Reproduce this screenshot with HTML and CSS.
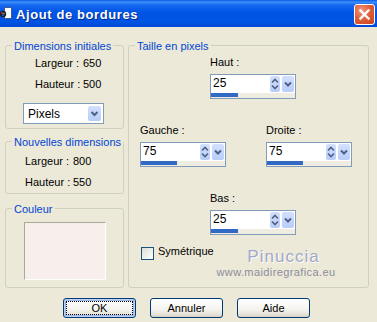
FILE: index.html
```html
<!DOCTYPE html>
<html lang="fr">
<head>
  <meta charset="UTF-8" />
  <meta name="viewport" content="width=device-width, initial-scale=1.0"/>
  <title>Ajout de bordures</title>
  <link rel="stylesheet" href="styles.css">
</head>

<body>
  <div class="window">
    <!-- Title bar -->
    <div class="titlebar">
      <svg class="app-icon" width="13" height="13" viewBox="0 0 13 13">
        <rect x="4.5" y="0.5" width="7" height="11" fill="#fff" stroke="#3a5a9a"/>
        <circle cx="3" cy="7" r="3.2" fill="#1a1a2a"/>
        <circle cx="2" cy="6" r="1" fill="#e03030"/>
        <circle cx="4" cy="6.5" r="1" fill="#30b040"/>
        <circle cx="2.8" cy="8.3" r="1" fill="#3060e0"/>
      </svg>
      <span class="title">Ajout de bordures</span>
      <span class="close-btn">
        <svg width="19" height="19" viewBox="0 0 19 19">
          <path d="M5.5 5.5 L13.5 13.5 M13.5 5.5 L5.5 13.5" stroke="#fff" stroke-width="2.4" stroke-linecap="square"/>
        </svg>
      </span>
    </div>

    <div class="dialog">
      <div class="columns">
        <div class="left-col">
          <div class="group group-initial">
            <div class="group-title">Dimensions initiales</div>
            <div class="dims">
              <span>Largeur :</span><span>650</span>
              <span>Hauteur :</span><span>500</span>
            </div>
            <div class="select">
              <span class="select-text">Pixels</span>
              <span class="drop-btn">
                <svg width="13" height="15" viewBox="0 0 13 15"><path d="M3.5 6 L6.5 9 L9.5 6" fill="none" stroke="#4d6185" stroke-width="2"/></svg>
              </span>
            </div>
          </div>

          <div class="group group-new">
            <div class="group-title">Nouvelles dimensions</div>
            <div class="dims">
              <span>Largeur :</span><span>800</span>
              <span>Hauteur :</span><span>550</span>
            </div>
          </div>

          <div class="group group-color">
            <div class="group-title">Couleur</div>
            <div class="swatch"></div>
          </div>
        </div>

        <div class="group group-size">
          <div class="group-title">Taille en pixels</div>

          <div class="field-row row-center">
            <div class="field">
              <span class="field-label">Haut :</span>
              <div class="spin">
                <div class="spin-main">
                  <span class="spin-value">25</span>
                  <span class="spin-arrows"><svg width="10" height="16" viewBox="0 0 10 16"><path d="M2 6.5 L5 3.5 L8 6.5 M2 9.5 L5 12.5 L8 9.5" fill="none" stroke="#4d6185" stroke-width="1.6"/></svg></span>
                  <span class="spin-drop"><svg width="12" height="16" viewBox="0 0 12 16"><path d="M3 6.5 L6 9.5 L9 6.5" fill="none" stroke="#4d6185" stroke-width="2"/></svg></span>
                </div>
                <div class="spin-bar"><div class="spin-fill" style="width:27px"></div></div>
              </div>
            </div>
          </div>

          <div class="field-row row-pair">
            <div class="field">
              <span class="field-label">Gauche :</span>
              <div class="spin">
                <div class="spin-main">
                  <span class="spin-value">75</span>
                  <span class="spin-arrows"><svg width="10" height="16" viewBox="0 0 10 16"><path d="M2 6.5 L5 3.5 L8 6.5 M2 9.5 L5 12.5 L8 9.5" fill="none" stroke="#4d6185" stroke-width="1.6"/></svg></span>
                  <span class="spin-drop"><svg width="12" height="16" viewBox="0 0 12 16"><path d="M3 6.5 L6 9.5 L9 6.5" fill="none" stroke="#4d6185" stroke-width="2"/></svg></span>
                </div>
                <div class="spin-bar"><div class="spin-fill" style="width:36px"></div></div>
              </div>
            </div>
            <div class="field">
              <span class="field-label">Droite :</span>
              <div class="spin">
                <div class="spin-main">
                  <span class="spin-value">75</span>
                  <span class="spin-arrows"><svg width="10" height="16" viewBox="0 0 10 16"><path d="M2 6.5 L5 3.5 L8 6.5 M2 9.5 L5 12.5 L8 9.5" fill="none" stroke="#4d6185" stroke-width="1.6"/></svg></span>
                  <span class="spin-drop"><svg width="12" height="16" viewBox="0 0 12 16"><path d="M3 6.5 L6 9.5 L9 6.5" fill="none" stroke="#4d6185" stroke-width="2"/></svg></span>
                </div>
                <div class="spin-bar"><div class="spin-fill" style="width:36px"></div></div>
              </div>
            </div>
          </div>

          <div class="field-row row-center">
            <div class="field">
              <span class="field-label">Bas :</span>
              <div class="spin">
                <div class="spin-main">
                  <span class="spin-value">25</span>
                  <span class="spin-arrows"><svg width="10" height="16" viewBox="0 0 10 16"><path d="M2 6.5 L5 3.5 L8 6.5 M2 9.5 L5 12.5 L8 9.5" fill="none" stroke="#4d6185" stroke-width="1.6"/></svg></span>
                  <span class="spin-drop"><svg width="12" height="16" viewBox="0 0 12 16"><path d="M3 6.5 L6 9.5 L9 6.5" fill="none" stroke="#4d6185" stroke-width="2"/></svg></span>
                </div>
                <div class="spin-bar"><div class="spin-fill" style="width:27px"></div></div>
              </div>
            </div>
          </div>

          <div class="options">
            <span class="checkbox"></span>
            <span class="check-label">Symétrique</span>
            <div class="watermark">
              <span class="wm-name">Pinuccia</span>
              <span class="wm-site">www.maidiregrafica.eu</span>
            </div>
          </div>
        </div>
      </div>

      <div class="buttons">
        <span class="btn btn-default"><span class="btn-focus">OK</span></span>
        <span class="btn">Annuler</span>
        <span class="btn">Aide</span>
      </div>
    </div>
  </div>
</body>
</html>
```

FILE: styles.css
```css
:root {
  --face: #ece9d8;
  --group-border: #d0d0bf;
  --legend: #0046d5;
  --field-border: #7f9db9;
  --spin-btn: #c6d5fc;
  --bar-fill: #316ac5;
}

body {
  margin: 0;
  background-color: var(--face);
  font-family: "Liberation Sans", Arial, sans-serif;
  font-size: 11px;
  color: #000;
}

.window {
  width: 377px;
  height: 322px;
  overflow: hidden;
  background-color: var(--face);
}

/* Title bar */
.titlebar {
  height: 27px;
  display: flex;
  align-items: flex-start;
  background: linear-gradient(to bottom, #0a5ae8 0%, #3d8ff8 8%, #1869f0 18%, #0055e5 45%, #0054e3 80%, #0048d8 100%);
}

.app-icon {
  margin-top: 7px;
  margin-right: 3px;
}

.title {
  margin-top: 7px;
  line-height: 15px;
  font-size: 13px;
  font-weight: bold;
  color: #fff;
  letter-spacing: 0.6px;
  text-shadow: 1px 1px 0 #0c2a8a;
}

.close-btn {
  margin: 4px 2px 0 auto;
  width: 19px;
  height: 19px;
  border: 1px solid #fff;
  border-radius: 3px;
  background: radial-gradient(circle at 35% 30%, #f09a80 0%, #e2603a 45%, #c8421e 100%);
  display: flex;
}

/* Dialog body */
.dialog {
  padding: 18px 0 0 5px;
}

.columns {
  display: flex;
  gap: 4px;
}

.left-col {
  width: 119px;
  display: flex;
  flex-direction: column;
}

.group {
  box-sizing: border-box;
  border: 1px solid var(--group-border);
  border-radius: 3px;
}

.group-title {
  width: fit-content;
  margin: -6px 0 0 6px;
  padding: 0 2px;
  line-height: 13px;
  color: var(--legend);
  background-color: var(--face);
}

.group-initial {
  height: 84px;
}

.group-new {
  height: 53px;
  margin-top: 12px;
}

.group-color {
  height: 80px;
  margin-top: 14px;
}

.group-size {
  width: 241px;
  height: 243px;
}

.dims {
  display: grid;
  grid-template-columns: 48px auto;
  row-gap: 8px;
  line-height: 13px;
}

.group-initial .dims {
  margin-top: 4px;
  padding-left: 29px;
}

.group-new .dims {
  margin-top: 6px;
  padding-left: 19px;
}

.select {
  box-sizing: border-box;
  width: 81px;
  height: 21px;
  margin: 12px 0 0 17px;
  padding: 1px;
  border: 1px solid var(--field-border);
  background: #fff;
  display: flex;
  align-items: center;
}

.select-text {
  flex: 1;
  padding-left: 3px;
  font-size: 12px;
}

.drop-btn {
  width: 13px;
  height: 15px;
  margin-right: 1px;
  background: linear-gradient(#d3e0fd, #b6cbf9);
  border-radius: 2px;
  display: flex;
}

.swatch {
  box-sizing: border-box;
  width: 82px;
  height: 58px;
  margin: 6px 0 0 18px;
  background-color: #f8efec;
  border: 1px solid;
  border-color: #aca899 #fff #fff #aca899;
}

/* Spin fields */
.field-row {
  display: flex;
}

.row-center {
  padding-left: 81px;
}

.row-pair {
  padding-left: 11px;
  gap: 40px;
}

.field-row:nth-of-type(2) {
  margin-top: 3px;
}

.field-row + .field-row {
  margin-top: 25px;
}

.field {
  display: flex;
  flex-direction: column;
}

.field-label {
  line-height: 13px;
}

.spin {
  box-sizing: border-box;
  width: 86px;
  height: 25px;
  margin-top: 5px;
  border: 1px solid var(--field-border);
  background: #fff;
}

.spin-main {
  height: 18px;
  display: flex;
  align-items: flex-start;
  padding: 1px 1px 0 0;
  box-sizing: border-box;
}

.spin-value {
  flex: 1;
  padding-left: 2px;
  font-size: 12px;
  line-height: 15px;
}

.spin-arrows,
.spin-drop {
  height: 16px;
  background: linear-gradient(#d3e0fd, #b9cdfa);
  border-radius: 2px;
  display: flex;
}

.spin-arrows {
  width: 10px;
  margin-right: 2px;
}

.spin-drop {
  width: 12px;
}

.spin-bar {
  height: 5px;
  background-color: #efece2;
}

.spin-fill {
  height: 4px;
  background-color: var(--bar-fill);
}

/* Checkbox and watermark */
.options {
  margin-top: 12px;
  padding-left: 12px;
  display: flex;
  align-items: flex-start;
}

.checkbox {
  box-sizing: border-box;
  width: 13px;
  height: 13px;
  border: 1px solid #1c5180;
  background: linear-gradient(135deg, #dcdcd7, #fff);
}

.check-label {
  margin: -2px 0 0 4px;
  line-height: 13px;
}

.watermark {
  width: 120px;
  margin: 1px 32px 0 auto;
  display: flex;
  flex-direction: column;
  align-items: center;
}

.wm-name {
  padding-left: 15px;
  font-size: 17px;
  line-height: 17px;
  letter-spacing: 1px;
  color: #a2a8c8;
  text-shadow: 1px 1px 0 #fff;
}

.wm-site {
  margin-top: 1px;
  font-size: 11px;
  line-height: 13px;
  letter-spacing: 0.4px;
  color: #8c8c9c;
}

/* Buttons */
.buttons {
  margin-top: 10px;
  padding-left: 58px;
  display: flex;
  gap: 14px;
}

.btn {
  box-sizing: border-box;
  width: 73px;
  height: 20px;
  border: 1px solid #003c74;
  border-radius: 3px;
  background: linear-gradient(#fff 0%, #f5f4ef 55%, #e6e3d8 85%, #d6d0c5 100%);
  display: flex;
  align-items: center;
  justify-content: center;
  line-height: 13px;
}

.btn-default {
  padding: 2px;
  box-shadow: inset 0 0 0 1px #bcd0f5, inset 0 0 0 2px #9ab8ec;
}

.btn-focus {
  flex: 1;
  align-self: stretch;
  display: flex;
  align-items: center;
  justify-content: center;
  border: 1px dotted #000;
}
```
